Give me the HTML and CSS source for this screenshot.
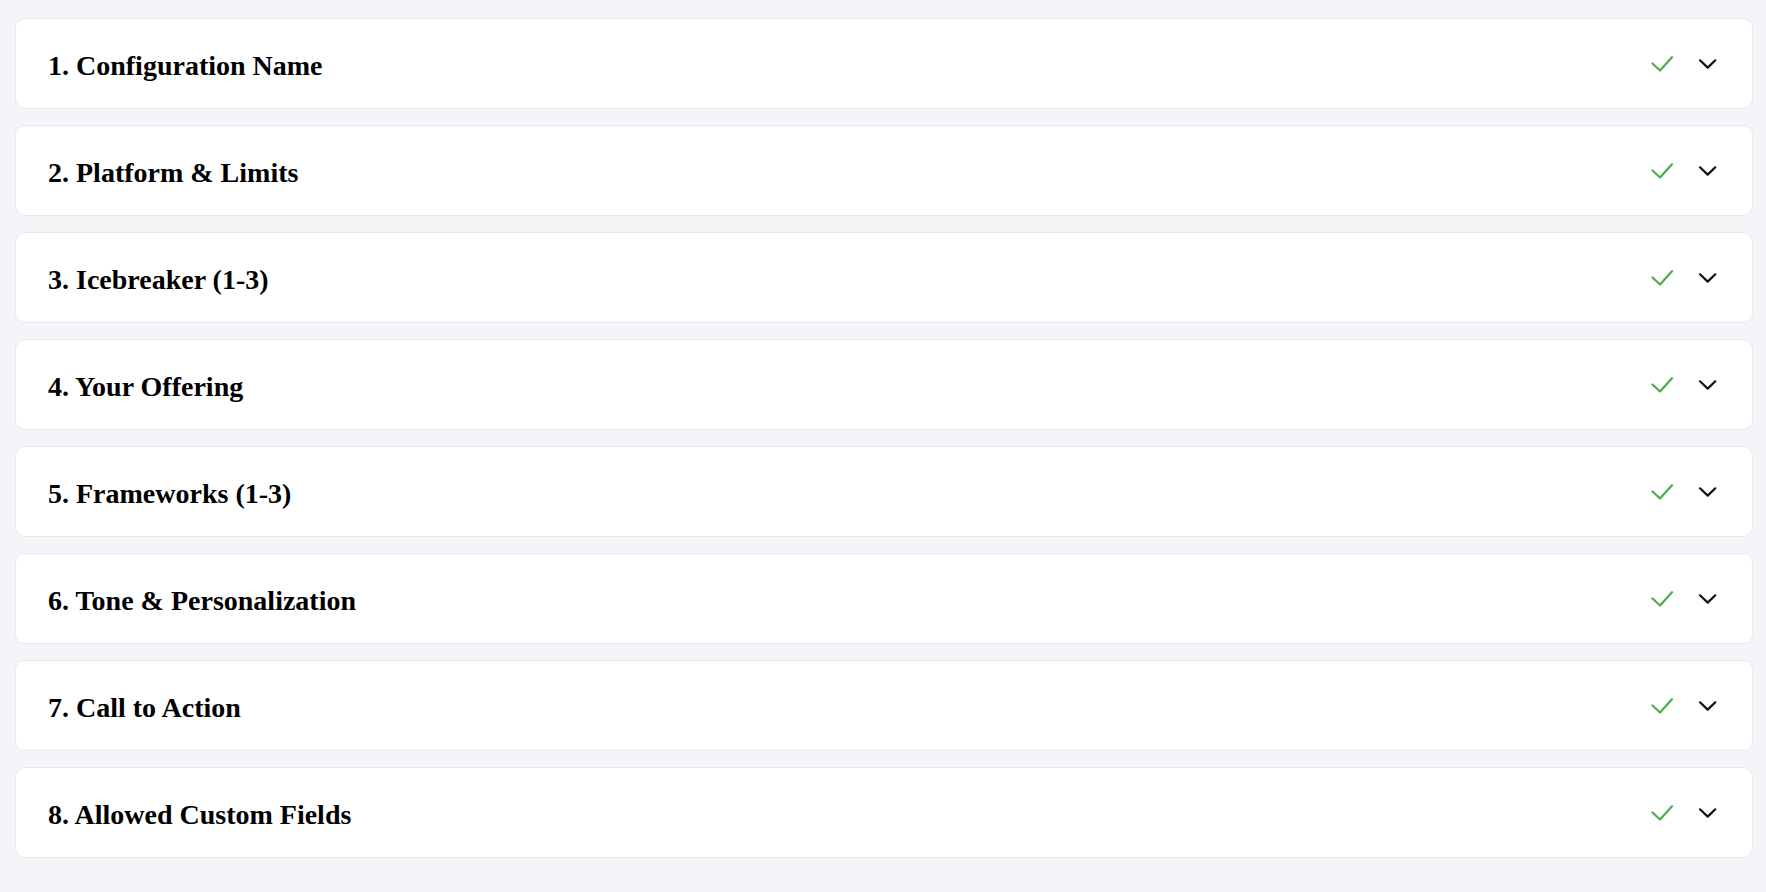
FILE: index.html
```html
<!DOCTYPE html>
<html lang="en">
<head>
    <meta charset="UTF-8">
    <meta name="viewport" content="width=device-width, initial-scale=1.0">
    <title>Message configuration</title>
    <link rel="stylesheet" href="styles.css">
</head>
<body>
    <div class="steps">
        <div class="step">
            <h2 class="step-title">1. Configuration Name</h2>
            <div class="step-icons">
                <svg class="icon-check" width="24" height="24" viewBox="0 0 24 24"><path d="M2.5 10.5 10 17.5 22 4.3"/></svg>
                <svg class="icon-chevron" width="24" height="24" viewBox="0 0 24 24"><path d="M4 7.3 11.7 14.6 19.3 7.3"/></svg>
            </div>
        </div>
        <div class="step">
            <h2 class="step-title">2. Platform &amp; Limits</h2>
            <div class="step-icons">
                <svg class="icon-check" width="24" height="24" viewBox="0 0 24 24"><path d="M2.5 10.5 10 17.5 22 4.3"/></svg>
                <svg class="icon-chevron" width="24" height="24" viewBox="0 0 24 24"><path d="M4 7.3 11.7 14.6 19.3 7.3"/></svg>
            </div>
        </div>
        <div class="step">
            <h2 class="step-title">3. Icebreaker (1-3)</h2>
            <div class="step-icons">
                <svg class="icon-check" width="24" height="24" viewBox="0 0 24 24"><path d="M2.5 10.5 10 17.5 22 4.3"/></svg>
                <svg class="icon-chevron" width="24" height="24" viewBox="0 0 24 24"><path d="M4 7.3 11.7 14.6 19.3 7.3"/></svg>
            </div>
        </div>
        <div class="step">
            <h2 class="step-title">4. Your Offering</h2>
            <div class="step-icons">
                <svg class="icon-check" width="24" height="24" viewBox="0 0 24 24"><path d="M2.5 10.5 10 17.5 22 4.3"/></svg>
                <svg class="icon-chevron" width="24" height="24" viewBox="0 0 24 24"><path d="M4 7.3 11.7 14.6 19.3 7.3"/></svg>
            </div>
        </div>
        <div class="step">
            <h2 class="step-title">5. Frameworks (1-3)</h2>
            <div class="step-icons">
                <svg class="icon-check" width="24" height="24" viewBox="0 0 24 24"><path d="M2.5 10.5 10 17.5 22 4.3"/></svg>
                <svg class="icon-chevron" width="24" height="24" viewBox="0 0 24 24"><path d="M4 7.3 11.7 14.6 19.3 7.3"/></svg>
            </div>
        </div>
        <div class="step">
            <h2 class="step-title">6. Tone &amp; Personalization</h2>
            <div class="step-icons">
                <svg class="icon-check" width="24" height="24" viewBox="0 0 24 24"><path d="M2.5 10.5 10 17.5 22 4.3"/></svg>
                <svg class="icon-chevron" width="24" height="24" viewBox="0 0 24 24"><path d="M4 7.3 11.7 14.6 19.3 7.3"/></svg>
            </div>
        </div>
        <div class="step">
            <h2 class="step-title">7. Call to Action</h2>
            <div class="step-icons">
                <svg class="icon-check" width="24" height="24" viewBox="0 0 24 24"><path d="M2.5 10.5 10 17.5 22 4.3"/></svg>
                <svg class="icon-chevron" width="24" height="24" viewBox="0 0 24 24"><path d="M4 7.3 11.7 14.6 19.3 7.3"/></svg>
            </div>
        </div>
        <div class="step">
            <h2 class="step-title">8. Allowed Custom Fields</h2>
            <div class="step-icons">
                <svg class="icon-check" width="24" height="24" viewBox="0 0 24 24"><path d="M2.5 10.5 10 17.5 22 4.3"/></svg>
                <svg class="icon-chevron" width="24" height="24" viewBox="0 0 24 24"><path d="M4 7.3 11.7 14.6 19.3 7.3"/></svg>
            </div>
        </div>
    </div>
</body>
</html>
```

FILE: styles.css
```css
body {
    margin: 0;
    background-color: #f4f5f9;
    font-family: "Liberation Serif", "Times New Roman", serif;
}
.steps {
    display: flex;
    flex-direction: column;
    gap: 16px;
    padding: 18px 13px 0 15px;
}
.step {
    display: flex;
    justify-content: space-between;
    align-items: center;
    padding: 31px 32px 26px 32px;
    background: white;
    border: 1px solid #e7e9ed;
    border-radius: 10px;
}
.step-title {
    margin: 0;
    font-size: 28px;
    line-height: 32px;
    font-weight: bold;
    color: #000;
}
.step-icons {
    display: flex;
    align-items: center;
    gap: 22px;
    margin-top: -3px;
}
.step-icons svg {
    display: block;
    fill: none;
    stroke-linecap: round;
    stroke-linejoin: round;
}
.icon-check {
    stroke: #4caf50;
    stroke-width: 2.3;
}
.icon-chevron {
    stroke: #111;
    stroke-width: 2.2;
}
```
